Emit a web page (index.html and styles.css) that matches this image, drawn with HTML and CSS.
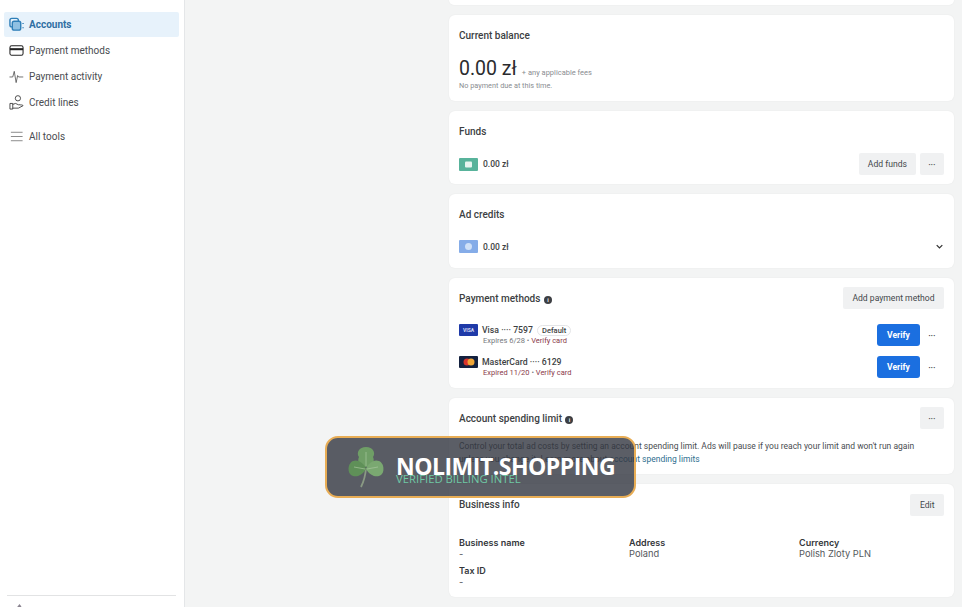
FILE: index.html
```html
<!DOCTYPE html>
<html lang="en">

<head>
    <meta charset="UTF-8">
    <meta name="viewport" content="width=device-width, initial-scale=1.0">
    <title>Billing</title>
    <link rel="stylesheet" href="styles.css">
</head>

<body>
    <div class="layout">
        <div class="sidebar">
            <div class="nav">
                <div class="nav-item active">
                    <svg class="nav-icon" viewBox="0 0 16 16" fill="none" stroke="#2f7fb8" stroke-width="1.5">
                        <rect x="1" y="1.5" width="9" height="9" rx="2"/>
                        <rect x="3.5" y="4.5" width="9" height="9.5" rx="2" fill="#8fc0e2"/>
                        <path d="M15 6.5v1M15 11v1"/>
                    </svg>
                    <span>Accounts</span>
                </div>
                <div class="nav-item">
                    <svg class="nav-icon" viewBox="0 0 16 16" fill="none" stroke="#222" stroke-width="1.1">
                        <rect x="1" y="3" width="14" height="10" rx="1.8"/>
                        <path d="M1 6.6h14" stroke-width="2.2"/>
                    </svg>
                    <span>Payment methods</span>
                </div>
                <div class="nav-item">
                    <svg class="nav-icon" viewBox="0 0 16 16" fill="none" stroke="#444" stroke-width="0.8">
                        <path d="M0.5 8.5h3.5l1.6-6 2 12 1.600-7.500 1 1.500h5"/>
                    </svg>
                    <span>Payment activity</span>
                </div>
                <div class="nav-item">
                    <svg class="nav-icon" viewBox="0 0 16 16" fill="none" stroke="#333" stroke-width="0.9">
                        <circle cx="9.5" cy="3.5" r="2.8"/>
                        <path d="M1 9h3v6H1zM4 10l3-1 3 1.4h2.5M4 14h6l5-2.6c-.5-1-1.5-1-2.500-.6"/>
                    </svg>
                    <span>Credit lines</span>
                </div>
                <div class="nav-item tools">
                    <svg class="nav-icon" viewBox="0 0 16 16" fill="none" stroke="#777" stroke-width="0.9">
                        <path d="M2 3.500h12.500M2 8h12.500M2 12.500h12.500"/>
                    </svg>
                    <span>All tools</span>
                </div>
            </div>
            <div class="sidebar-foot">
                <svg class="foot-icon" viewBox="0 0 12 12" fill="#8a8490">
                    <path d="M6 0l3 4v8H2V5z"/>
                </svg>
            </div>
        </div>

        <div class="main">
            <div class="card card-top"></div>

            <div class="card balance">
                <h2>Current balance</h2>
                <div class="balance-row">
                    <span class="amount">0.00 zł</span>
                    <span class="fees">+ any applicable fees</span>
                </div>
                <div class="note">No payment due at this time.</div>
            </div>

            <div class="card funds">
                <h2>Funds</h2>
                <div class="row">
                    <div class="row-left">
                        <span class="pill green">
                            <svg viewBox="0 0 19 13" width="19" height="13">
                                <rect x="6" y="3.500" width="7" height="6" rx="1" fill="#e8f5f0"/>
                            </svg>
                        </span>
                        <span class="value">0.00 zł</span>
                    </div>
                    <div class="actions tight">
                        <button class="btn">Add funds</button>
                        <button class="btn more">&bull;&bull;&bull;</button>
                    </div>
                </div>
            </div>

            <div class="card credits">
                <h2>Ad credits</h2>
                <div class="row">
                    <div class="row-left">
                        <span class="pill blue">
                            <svg viewBox="0 0 19 13" width="19" height="13">
                                <circle cx="9.500" cy="6.500" r="3.500" fill="#cfe0f7"/>
                            </svg>
                        </span>
                        <span class="value">0.00 zł</span>
                    </div>
                    <svg class="chevron" viewBox="0 0 10 6" width="7" height="5" fill="none" stroke="#333" stroke-width="1.800">
                        <path d="M1 1l4 4 4-4"/>
                    </svg>
                </div>
            </div>

            <div class="card methods">
                <div class="card-head">
                    <h2>Payment methods <span class="info">i</span></h2>
                    <button class="btn">Add payment method</button>
                </div>
                <div class="method">
                    <span class="card-logo visa">VISA</span>
                    <div class="method-text">
                        <div class="method-name">Visa &middot;&middot;&middot;&middot; 7597 <span class="tag">Default</span></div>
                        <div class="method-sub">Expires 6/28 &bull; <span class="warn">Verify card</span></div>
                    </div>
                    <button class="btn primary">Verify</button>
                    <span class="dots">&bull;&bull;&bull;</span>
                </div>
                <div class="method">
                    <span class="card-logo mc">
                        <svg viewBox="0 0 18 12" width="18" height="12">
                            <circle cx="7" cy="6" r="3.500" fill="#d9342b"/>
                            <circle cx="11" cy="6" r="3.500" fill="#f0a637"/>
                        </svg>
                    </span>
                    <div class="method-text">
                        <div class="method-name">MasterCard &middot;&middot;&middot;&middot; 6129</div>
                        <div class="method-sub"><span class="warn">Expired 11/20</span> &bull; <span class="warn">Verify card</span></div>
                    </div>
                    <button class="btn primary">Verify</button>
                    <span class="dots">&bull;&bull;&bull;</span>
                </div>
            </div>

            <div class="card limit">
                <div class="card-head">
                    <h2>Account spending limit <span class="info">i</span></h2>
                    <button class="btn more">&bull;&bull;&bull;</button>
                </div>
                <p>Control your total ad costs by setting an account spending limit. Ads will pause if you reach your limit and won't run again<br>unless you change it. Learn more about <a href="#">account spending limits</a></p>
            </div>

            <div class="card business">
                <div class="card-head">
                    <h2>Business info</h2>
                    <button class="btn">Edit</button>
                </div>
                <div class="info-grid">
                    <div><strong>Business name</strong><span>-</span></div>
                    <div><strong>Address</strong><span>Poland</span></div>
                    <div><strong>Currency</strong><span>Polish Zloty PLN</span></div>
                    <div><strong>Tax ID</strong><span>-</span></div>
                </div>
            </div>
        </div>
    </div>

    <div class="watermark">
        <svg class="clover" viewBox="0 0 36 42">
            <path d="M18 22c-.5 7-2 13-5 19" fill="none" stroke="#8a9a84" stroke-width="1.800"/>
            <path d="M18 21C11 21 9 15 11 11 8 7 11 1 18 1s10 6 7 10c2 4 0 10-7 10z" fill="#6f9e66"/>
            <path d="M18 23c-4 7-11 9-15 6C-1 26 0 17 5 15c5-2 11 2 13 8z" fill="#5f9058"/>
            <path d="M18 23c4 7 11 9 15 6 4-3 3-12-2-14-5-2-11 2-13 8z" fill="#7aa871"/>
            <path d="M18 20V6M17 23L6 21M19 23l11-2" fill="none" stroke="#a8c79e" stroke-width="0.700"/>
        </svg>
        <div class="brand">
            <div class="brand-name">NOLIMIT.SHOPPING</div>
            <div class="brand-sub">VERIFIED BILLING INTEL</div>
        </div>
    </div>
</body>

</html>
```

FILE: styles.css
```css
:root {
    --text: #3a3c40;
    --muted: #8a8d91;
    --line: #e4e6e8;
    --background: #f3f4f4;
    --button: #f0f1f2;
    --blue: #1b6fe0;
}

* {
    box-sizing: border-box;
    margin: 0;
    padding: 0;
    font-family: Roboto, 'Liberation Sans', sans-serif;
}

html,
body {
    height: 100%;
    overflow: hidden;
}

body {
    background: var(--background);
    color: var(--text);
}

.layout {
    display: flex;
    height: 607px;
}

.sidebar {
    width: 185px;
    flex-shrink: 0;
    background: white;
    border-right: 1px solid var(--line);
    padding: 12px 5px 0 4px;
    display: flex;
    flex-direction: column;
}

.nav {
    flex: 1;
}

.nav-item {
    display: flex;
    align-items: center;
    gap: 5px;
    height: 25px;
    margin-bottom: 1px;
    padding-left: 5px;
    font-size: 10px;
    color: #4a4d51;
}

.nav-item.active {
    background: #e7f2fb;
    color: #2f6fa3;
    font-weight: 700;
    border-radius: 2px;
}

.nav-item.tools {
    margin-top: 9px;
}

.nav-icon {
    width: 15px;
    height: 15px;
    flex-shrink: 0;
}

.sidebar-foot {
    margin: 0 3px;
    height: 12px;
    border-top: 1px solid #e2e3e4;
    padding: 8px 0 0 9px;
}

.foot-icon {
    width: 7px;
    height: 7px;
    display: block;
}

.main {
    flex: 1;
    min-width: 0;
    padding-left: 264px;
    padding-right: 8px;
    display: flex;
    flex-direction: column;
    gap: 10px;
}

.card {
    background: white;
    border-radius: 6px;
    box-shadow: 0 0 2px rgba(0, 0, 0, 0.06);
    padding: 14px 10px 0;
    flex-shrink: 0;
}

h2 {
    font-size: 10px;
    font-weight: 500;
    line-height: 13px;
    color: #3d3f43;
}

.card-top {
    height: 5px;
    padding: 0;
    border-radius: 0 0 6px 6px;
}

.balance {
    height: 86px;
}

.balance-row {
    display: flex;
    align-items: baseline;
    gap: 5px;
    margin-top: 15px;
    height: 24px;
}

.amount {
    font-size: 19.500px;
    color: #2a2b2e;
    line-height: 24px;
}

.fees {
    font-size: 7.500px;
    color: var(--muted);
}

.note {
    font-size: 7.300px;
    color: var(--muted);
}

.funds {
    height: 73px;
}

.credits {
    height: 74px;
}

.row {
    display: flex;
    align-items: center;
    justify-content: space-between;
}

.funds .row {
    margin-top: 15px;
}

.credits .row {
    margin-top: 19px;
}

.row-left {
    display: flex;
    align-items: center;
    gap: 5px;
}

.pill {
    width: 19px;
    height: 13px;
    border-radius: 1px;
    display: flex;
}

.green {
    background: #58b39b;
}

.blue {
    background: #85ace8;
}

.value {
    font-size: 8.500px;
    font-weight: 500;
    color: #3d3f43;
}

.chevron {
    margin-right: 1px;
}

.actions {
    display: flex;
}

.tight {
    gap: 4px;
}

.btn {
    height: 22px;
    padding: 0 9px;
    border: none;
    border-radius: 2px;
    background: var(--button);
    font-size: 8.600px;
    color: #44474b;
}

.more {
    width: 24px;
    padding: 0;
    font-size: 6px;
    letter-spacing: 0.300px;
}

.primary {
    background: var(--blue);
    color: white;
    font-weight: 700;
    width: 43px;
    padding: 0;
    border-radius: 3px;
}

.card-head {
    display: flex;
    justify-content: space-between;
    align-items: center;
}

.info {
    display: inline-block;
    width: 8px;
    height: 8px;
    margin-left: 1px;
    border-radius: 50%;
    background: #3d3f43;
    color: white;
    font-size: 6px;
    line-height: 8px;
    text-align: center;
    vertical-align: 0;
}

.methods {
    height: 110px;
    padding-top: 9px;
}

.methods .card-head {
    margin-bottom: 14px;
}

.methods .card-head .btn {
    padding: 0 9.500px;
}

.method {
    display: flex;
    align-items: center;
    height: 24px;
    margin-bottom: 8px;
}

.card-logo {
    width: 19px;
    height: 12px;
    border-radius: 1px;
    margin: 0 4px 10px 0;
    display: flex;
    align-items: center;
    justify-content: center;
    color: #d5dcf5;
    font-size: 5px;
    font-weight: 700;
}

.visa {
    background: #1f3aa8;
}

.mc {
    background: #14213f;
}

.method-text {
    flex: 1;
}

.method-name {
    font-size: 8.700px;
    font-weight: 500;
    line-height: 12px;
    color: #3d3f43;
}

.tag {
    display: inline-block;
    margin-left: 2px;
    padding: 0 4px;
    border: 1px solid #e4e5e7;
    border-radius: 6px;
    font-size: 7.500px;
    line-height: 9px;
}

.method-sub {
    font-size: 7.500px;
    line-height: 10px;
    margin-left: 1px;
    color: #75787c;
}

.warn {
    color: #8a3a4a;
}

.dots {
    width: 24px;
    text-align: center;
    font-size: 6px;
    letter-spacing: 0.300px;
    color: #33363a;
}

.limit {
    height: 76px;
    padding-top: 9px;
}

.limit p {
    margin-top: 11px;
    font-size: 8.500px;
    line-height: 13px;
    color: #4a4d51;
    white-space: nowrap;
}

.limit a {
    color: #2f6f8f;
    text-decoration: none;
}

.business {
    height: 113px;
    padding-top: 10px;
}

.business .card-head {
    align-items: flex-start;
}

.business h2 {
    margin-top: 4px;
}

.business .btn {
    padding: 0 9.500px;
}

.info-grid {
    display: grid;
    grid-template-columns: 170px 170px 1fr;
    row-gap: 6px;
    margin-top: 21px;
    font-family: Inter, Roboto, sans-serif;
    font-size: 9px;
    line-height: 11px;
}

.info-grid strong,
.info-grid span {
    display: block;
    font-family: Inter, Roboto, sans-serif;
}

.info-grid strong {
    font-weight: 600;
    color: #34363a;
}

.info-grid span {
    font-size: 9.300px;
    color: #55585c;
}

.watermark {
    position: absolute;
    left: 325px;
    top: 436px;
    width: 311px;
    height: 62px;
    display: flex;
    align-items: center;
    padding-left: 21px;
    border: 2px solid #e8ad55;
    border-radius: 13px;
    background: rgba(50, 54, 64, 0.8);
}

.clover {
    width: 36px;
    height: 42px;
    flex-shrink: 0;
}

.brand {
    margin-left: 12px;
    margin-top: 5px;
}

.brand-name {
    font-family: 'Open Sans', sans-serif;
    font-size: 23px;
    font-weight: 700;
    line-height: 24px;
    letter-spacing: -0.500px;
    color: white;
}

.brand-sub {
    font-family: 'Open Sans', sans-serif;
    font-size: 11.300px;
    line-height: 12px;
    margin-top: -5px;
    color: #6fc9a5;
}
```
